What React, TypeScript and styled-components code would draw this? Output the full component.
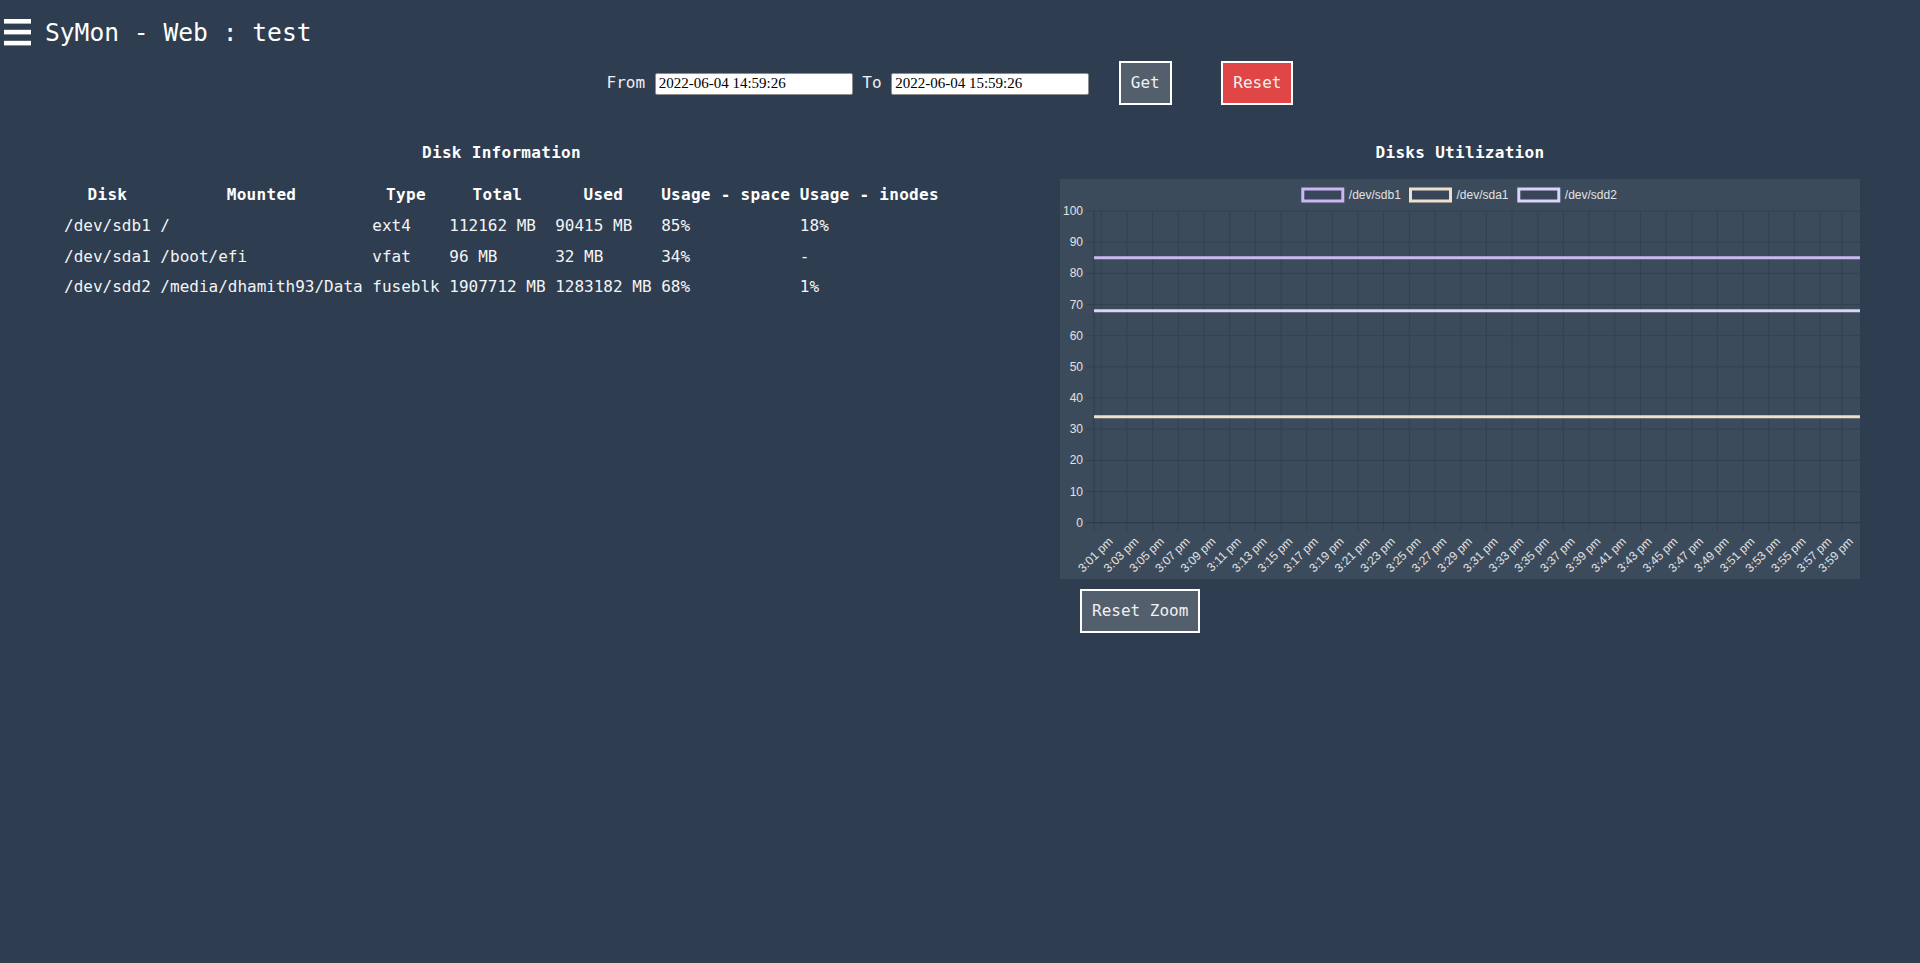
import React from 'react';
import styled, { createGlobalStyle } from 'styled-components';

const GlobalStyle = createGlobalStyle`
  html, body {
    margin: 0;
    padding: 0;
    background: #2e3d50;
  }
  body {
    font-family: "DejaVu Sans Mono", "Liberation Mono", monospace;
    font-size: 16px;
    color: #f4f4f4;
  }
`;

const Page = styled.div`
  min-height: 963px;
  background: #2e3d50;
`;

const Header = styled.header`
  display: flex;
  align-items: center;
  gap: 14px;
  padding: 18px 0 0 4px;
  height: 29px;
`;

const Title = styled.h1`
  margin: 0;
  font-size: 24.6px;
  line-height: 29px;
  font-weight: normal;
  color: #ffffff;
`;

const Controls = styled.div`
  display: flex;
  justify-content: center;
  align-items: center;
  gap: 9.6px;
  margin-top: 14px;
`;

const Label = styled.span`
  color: #f0f0f0;
  line-height: 20px;
`;

const DateInput = styled.input`
  box-sizing: border-box;
  width: 198px;
  height: 22px;
  margin-top: 1px;
  padding: 1px 3px;
  border: 1px solid #8d8d8d;
  border-radius: 2px;
  background: #ffffff;
  color: #000000;
  font-family: "Liberation Serif", "Times New Roman", serif;
  font-size: 15px;
  outline: none;
`;

const Button = styled.button<{ $bg: string }>`
  margin: 0 20px;
  padding: 10px;
  border: 2px solid #ffffff;
  background: ${(p) => p.$bg};
  color: #f0f0f0;
  font-family: "DejaVu Sans Mono", "Liberation Mono", monospace;
  font-size: 16px;
  line-height: 20px;
  cursor: pointer;
`;

const Main = styled.main`
  display: grid;
  grid-template-columns: 1fr 1fr;
  margin-top: 38.2px;
`;

const Column = styled.section<{ $pad: number }>`
  display: flex;
  flex-direction: column;
  align-items: center;
  padding-left: ${(p) => p.$pad}px;
`;

const Heading = styled.h3`
  margin: 0 0 15.8px;
  font-size: 16px;
  line-height: 20px;
  font-weight: bold;
  letter-spacing: 0.3px;
  color: #ffffff;
`;

const Table = styled.table`
  border-spacing: 2px;
  margin-top: -0.8px;
`;

const Th = styled.th`
  padding: 4px 3.8px;
  line-height: 21.9px;
  font-weight: bold;
  letter-spacing: 0.3px;
  text-align: center;
  white-space: nowrap;
  color: #ffffff;
`;

const Td = styled.td`
  padding: 4px 3.8px;
  line-height: 20.6px;
  text-align: left;
  white-space: nowrap;
  color: #f4f4f4;
`;

const ChartWrap = styled.div`
  width: 800px;
  display: flex;
  flex-direction: column;
  align-items: flex-start;
`;

const ChartSvg = styled.svg`
  display: block;
  background: #3c4b5c;
`;

const ZoomButton = styled(Button)`
  margin: 10px 20px;
`;

const Hamburger = () => (
  <svg width="27" height="27" viewBox="0 0 27 27">
    <rect x="0" y="0" width="27" height="4.6" fill="#ffffff" />
    <rect x="0" y="10.8" width="27" height="4.6" fill="#ffffff" />
    <rect x="0" y="21.8" width="27" height="4.6" fill="#ffffff" />
  </svg>
);

const disks = [
  { disk: '/dev/sdb1', mount: '/', type: 'ext4', total: '112162 MB', used: '90415 MB', space: '85%', inodes: '18%' },
  { disk: '/dev/sda1', mount: '/boot/efi', type: 'vfat', total: '96 MB', used: '32 MB', space: '34%', inodes: '-' },
  { disk: '/dev/sdd2', mount: '/media/dhamith93/Data', type: 'fuseblk', total: '1907712 MB', used: '1283182 MB', space: '68%', inodes: '1%' },
];

const series = [
  { name: '/dev/sdb1', value: 85, color: '#cbb8f2', box: 242.8 },
  { name: '/dev/sda1', value: 34, color: '#ede1cb', box: 350.5 },
  { name: '/dev/sdd2', value: 68, color: '#dad5f7', box: 458.8 },
];

const PLOT_LEFT = 34;
const PLOT_RIGHT = 800;
const Y_TOP = 32;
const Y_ZERO = 343.7;
const yFor = (v: number) => Y_ZERO - ((Y_ZERO - Y_TOP) * v) / 100;

const ticks: { x: number; label: string }[] = [];
for (let i = 0; i < 29; i++) {
  const min = 1 + i * 2;
  ticks.push({ x: 41.3 + i * 25.67, label: `3:${String(min).padStart(2, '0')} pm` });
}
ticks.push({ x: 781.7, label: '3:59 pm' });

const gridColor = '#33404f';
const labelColor = '#e2e2e2';
const chartFont = '"Liberation Sans", Arial, sans-serif';

const Chart = () => (
  <ChartSvg width="800" height="400" viewBox="0 0 800 400">
    {series.map((s) => (
      <g key={s.name}>
        <rect x={s.box} y={10} width={40} height={12} fill="#38455a" stroke={s.color} strokeWidth={3} />
        <text x={s.box + 46} y={20.3} fontFamily={chartFont} fontSize="12" fill={labelColor}>
          {s.name}
        </text>
      </g>
    ))}
    {Array.from({ length: 11 }, (_, i) => i * 10).map((v) => (
      <g key={v}>
        <line
          x1={PLOT_LEFT - 8}
          x2={PLOT_RIGHT}
          y1={yFor(v)}
          y2={yFor(v)}
          stroke={v === 0 ? '#2c3845' : gridColor}
          strokeWidth={1}
        />
        <text x={23} y={yFor(v) + 4} textAnchor="end" fontFamily={chartFont} fontSize="12" fill={labelColor}>
          {v}
        </text>
      </g>
    ))}
    <line x1={PLOT_LEFT} x2={PLOT_LEFT} y1={Y_TOP} y2={Y_ZERO + 8} stroke="#2f3b49" strokeWidth={1} />
    {ticks.map((t) => (
      <g key={t.label + t.x}>
        <line x1={t.x} x2={t.x} y1={Y_TOP} y2={Y_ZERO + 8} stroke={gridColor} strokeWidth={1} />
        <text
          x={t.x + 10}
          y={361}
          textAnchor="end"
          dominantBaseline="middle"
          transform={`rotate(-45 ${t.x + 10} 361)`}
          fontFamily={chartFont}
          fontSize="12"
          fill={labelColor}
        >
          {t.label}
        </text>
      </g>
    ))}
    {series.map((s) => (
      <line
        key={s.name + 'line'}
        x1={PLOT_LEFT}
        x2={PLOT_RIGHT}
        y1={yFor(s.value)}
        y2={yFor(s.value)}
        stroke={s.color}
        strokeWidth={3}
      />
    ))}
  </ChartSvg>
);

export default function App() {
  return (
    <Page>
      <GlobalStyle />
      <Header>
        <Hamburger />
        <Title>SyMon - Web : test</Title>
      </Header>
      <Controls>
        <Label>From</Label>
        <DateInput type="text" defaultValue="2022-06-04 14:59:26" />
        <Label>To</Label>
        <DateInput type="text" defaultValue="2022-06-04 15:59:26" />
        <Button $bg="#535f6c">Get</Button>
        <Button $bg="#e04646">Reset</Button>
      </Controls>
      <Main>
        <Column $pad={43}>
          <Heading>Disk Information</Heading>
          <Table>
            <thead>
              <tr>
                <Th>Disk</Th>
                <Th>Mounted</Th>
                <Th>Type</Th>
                <Th>Total</Th>
                <Th>Used</Th>
                <Th>Usage - space</Th>
                <Th>Usage - inodes</Th>
              </tr>
            </thead>
            <tbody>
              {disks.map((d) => (
                <tr key={d.disk}>
                  <Td>{d.disk}</Td>
                  <Td>{d.mount}</Td>
                  <Td>{d.type}</Td>
                  <Td>{d.total}</Td>
                  <Td>{d.used}</Td>
                  <Td>{d.space}</Td>
                  <Td>{d.inodes}</Td>
                </tr>
              ))}
            </tbody>
          </Table>
        </Column>
        <Column $pad={40}>
          <Heading>Disks Utilization</Heading>
          <ChartWrap>
            <Chart />
            <ZoomButton $bg="#535f6c">Reset Zoom</ZoomButton>
          </ChartWrap>
        </Column>
      </Main>
    </Page>
  );
}
